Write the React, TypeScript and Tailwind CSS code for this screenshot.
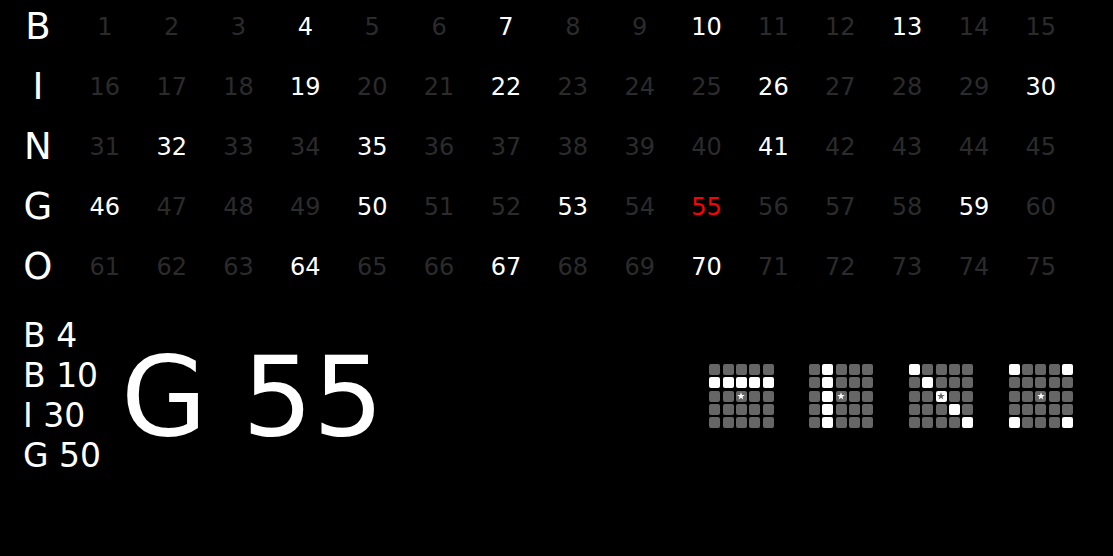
import React from 'react';

const letters = ['B', 'I', 'N', 'G', 'O'];
const called = [4, 7, 10, 13, 19, 22, 26, 30, 32, 35, 41, 46, 50, 53, 55, 59, 64, 67, 70];
const current = 55;
const recent = ['B 4', 'B 10', 'I 30', 'G 50'];

// marked cells for each pattern card (row * 5 + col)
const patterns: number[][] = [
  [5, 6, 7, 8, 9],
  [1, 6, 11, 16, 21],
  [0, 6, 12, 18, 24],
  [0, 4, 20, 24],
];

const Star: React.FC<{ color: string }> = ({ color }) => (
  <svg width="8" height="8" viewBox="0 0 24 24">
    <polygon
      points="12,1 15,9 23.5,9 16.5,14 19,22.5 12,17.5 5,22.5 7.5,14 0.5,9 9,9"
      fill={color}
    />
  </svg>
);

const PatternCard: React.FC<{ marked: number[] }> = ({ marked }) => (
  <div className="grid grid-cols-[repeat(5,11px)] gap-[2.33px]">
    {Array.from({ length: 25 }, (_, i) => {
      const on = marked.includes(i);
      return (
        <div
          key={i}
          className={`w-[11px] h-[11px] rounded-[2px] flex items-center justify-center ${
            on ? 'bg-white' : 'bg-[#666666]'
          }`}
        >
          {i === 12 && <Star color={on ? '#666666' : '#ffffff'} />}
        </div>
      );
    })}
  </div>
);

export default function App() {
  return (
    <div
      className="w-full h-[556px] bg-black text-white overflow-hidden pt-[1px]"
      style={{ fontFamily: '"DejaVu Sans", sans-serif' }}
    >
      <div className="grid grid-cols-[repeat(16,66.86px)] auto-rows-[52px] gap-y-[8px] pl-[4.5px]">
        {letters.map((letter, r) => (
          <React.Fragment key={letter}>
            <div className="flex items-center justify-center text-[37px] text-white">{letter}</div>
            {Array.from({ length: 15 }, (_, c) => {
              const n = r * 15 + c + 1;
              const color =
                n === current ? 'text-[#ff0000]' : called.includes(n) ? 'text-white' : 'text-[#2b2b2b]';
              return (
                <div key={n} className={`flex items-center justify-center text-[24px] ${color}`}>
                  {n}
                </div>
              );
            })}
          </React.Fragment>
        ))}
      </div>

      <div className="flex items-center mt-[23px] pl-[23px] pr-[40px]">
        <div className="flex flex-col text-[33px] leading-[40px] w-[98px]">
          {recent.map((r) => (
            <div key={r}>{r}</div>
          ))}
        </div>
        <div className="text-[111px] leading-none">G 55</div>
        <div className="ml-auto flex gap-[35.5px]">
          {patterns.map((p, i) => (
            <PatternCard key={i} marked={p} />
          ))}
        </div>
      </div>
    </div>
  );
}
